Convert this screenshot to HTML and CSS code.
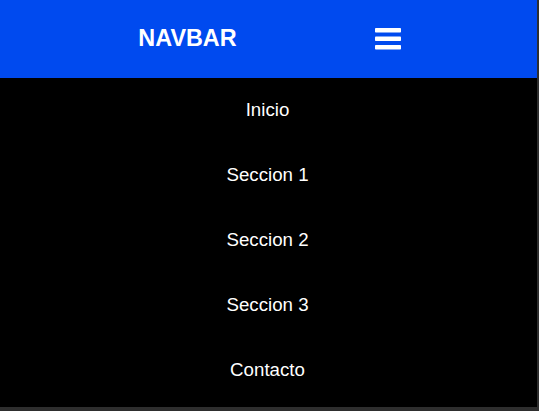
FILE: index.html
```html
<!DOCTYPE html>
<html lang="es">
<head>
<meta charset="utf-8">
<title>Navbar</title>
<link rel="stylesheet" href="styles.css">
</head>
<body>
<div class="page">
  <header class="navbar">
    <span class="brand">NAVBAR</span>
    <button class="toggle" aria-label="Menu">
      <svg width="26" height="22" viewBox="0 0 26 22">
        <rect x="0" y="0" width="26" height="4.5" rx="0.8" fill="#fff"/>
        <rect x="0" y="8.5" width="26" height="4.5" rx="0.8" fill="#fff"/>
        <rect x="0" y="17" width="26" height="4.5" rx="0.8" fill="#fff"/>
      </svg>
    </button>
  </header>
  <nav class="menu">
    <a class="menu-item" href="#">Inicio</a>
    <a class="menu-item" href="#">Seccion 1</a>
    <a class="menu-item" href="#">Seccion 2</a>
    <a class="menu-item" href="#">Seccion 3</a>
    <a class="menu-item" href="#">Contacto</a>
  </nav>
</div>
</body>
</html>
```
FILE: styles.css
```css
html, body {
  margin: 0;
  padding: 0;
  background: #2e2e2e;
  height: 100%;
}
body {
  font-family: "Liberation Sans", Arial, sans-serif;
}
.page {
  width: 537px;
  height: 407px;
  background: #000;
  display: flex;
  flex-direction: column;
}
.navbar {
  height: 78px;
  background: #004aef;
  display: flex;
  align-items: center;
  justify-content: center;
  gap: 138px;
  padding-left: 2px;
  padding-bottom: 1px;
  box-sizing: border-box;
}
.brand {
  color: #fff;
  font-weight: bold;
  font-size: 23.4px;
}
.toggle {
  background: none;
  border: 0;
  padding: 0;
  width: 26px;
  height: 22px;
  display: flex;
  margin-top: 1px;
}
.menu {
  display: flex;
  flex-direction: column;
}
.menu-item {
  height: 65px;
  display: flex;
  align-items: center;
  justify-content: center;
  color: #fff;
  text-decoration: none;
  font-size: 18.7px;
  padding-bottom: 2px;
  padding-right: 2px;
  box-sizing: border-box;
}
```
